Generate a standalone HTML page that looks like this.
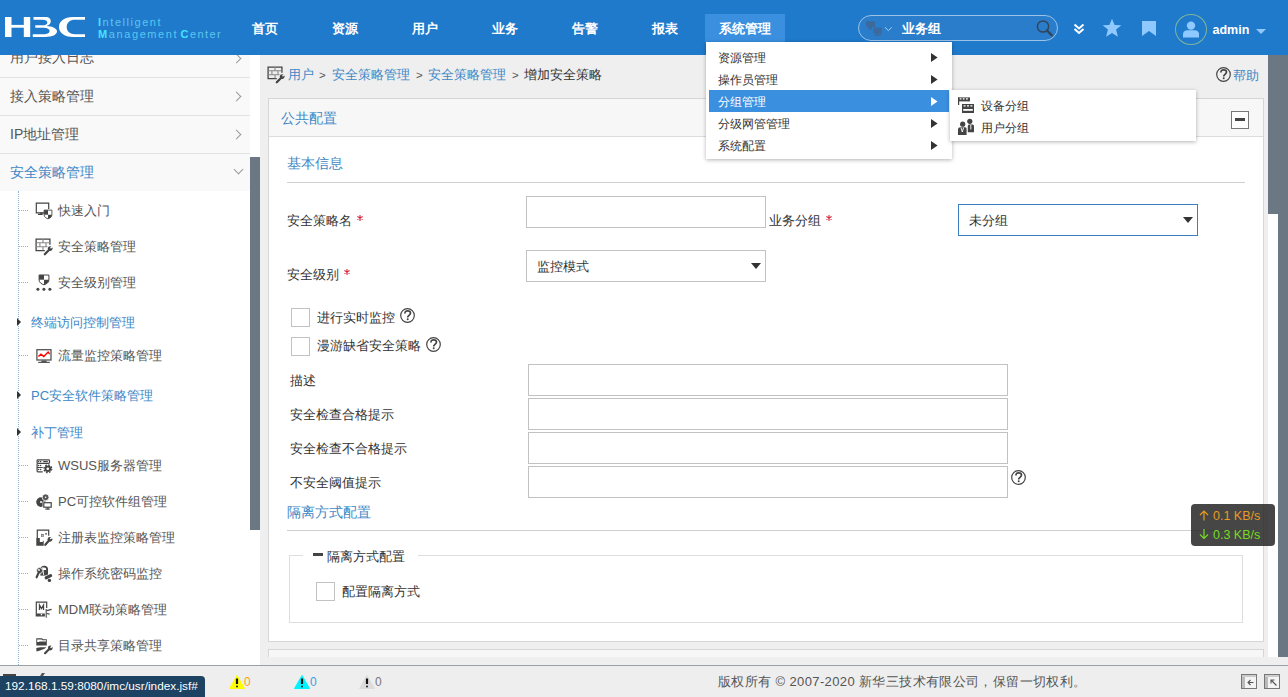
<!DOCTYPE html>
<html><head><meta charset="utf-8">
<style>
*{box-sizing:border-box;margin:0;padding:0}
html,body{width:1288px;height:697px;overflow:hidden;background:#efefef;font-family:"Liberation Sans",sans-serif;color:#333}
.a{position:absolute}
.t{position:absolute;white-space:nowrap;line-height:20px;height:20px}
.nav{position:absolute;top:19px;line-height:20px;font-size:13px;font-weight:900;color:#fff;white-space:nowrap}
.srow{position:absolute;left:0;width:250px;height:38px;background:#f9f9f9;border-bottom:1px solid #e2e2e2}
.srow span{position:absolute;left:10px;top:8px;line-height:20px;font-size:14px;color:#555;white-space:nowrap}
.chev{position:absolute;left:233px;width:7px;height:7px;border-right:1px solid #9a9a9a;border-top:1px solid #9a9a9a;transform:rotate(45deg)}
.sub{position:absolute;left:58px;font-size:13px;color:#555;line-height:20px;white-space:nowrap}
.cat{position:absolute;left:31px;font-size:13px;color:#3c88c8;line-height:20px;white-space:nowrap}
.hc{position:absolute;left:19px;width:9px;height:1px;border-top:1px dotted #8fb3d6}
.ctri{position:absolute;left:17px;width:0;height:0;border-top:4px solid transparent;border-bottom:4px solid transparent;border-left:4px solid #333}
.ico{position:absolute;left:36px;width:16px;height:16px}
.lbl{position:absolute;font-size:13px;color:#333;line-height:20px;white-space:nowrap}
.inp{position:absolute;background:#fff;border:1px solid #c2c2c2}
.cb{position:absolute;width:19px;height:19px;background:#fff;border:1px solid #c2c2c2}
.req{position:absolute;color:#d4303a;font-size:13px;line-height:20px}
.dtri{position:absolute;width:0;height:0;border-left:5px solid transparent;border-right:5px solid transparent;border-top:6px solid #333}
.mi{position:absolute;left:718px;font-size:12px;line-height:20px;color:#333;white-space:nowrap}
.mtri{position:absolute;left:931px;width:0;height:0;border-top:4.5px solid transparent;border-bottom:4.5px solid transparent;border-left:6px solid #333}
.q{position:absolute;width:15px;height:15px;border:1.5px solid #555;border-radius:50%;font-size:11px;font-weight:bold;color:#555;text-align:center;line-height:12px}
.blue{color:#3f87c5}
</style></head><body>
<!-- content background -->
<div class="a" style="left:260px;top:55px;width:1028px;height:610px;background:#efefef"></div>

<!-- ============ SIDEBAR ============ -->
<div class="a" style="left:0;top:55px;width:250px;height:610px;background:#fff"></div>
<div class="srow" style="top:40px"><span style="top:7px">用户接入日志</span></div>
<div class="chev" style="top:55px"></div>
<div class="srow" style="top:78px"><span>接入策略管理</span></div>
<div class="chev" style="top:93px"></div>
<div class="srow" style="top:116px"><span>IP地址管理</span></div>
<div class="chev" style="top:131px"></div>
<div class="srow" style="top:154px;height:37px;border-bottom:none"><span style="color:#3f87c5">安全策略管理</span></div>
<div class="chev" style="left:235px;top:166px;transform:rotate(135deg)"></div>

<!-- tree -->
<div class="a" style="left:18px;top:191px;width:1px;height:474px;border-left:1px dotted #8fb3d6"></div>
<div class="hc" style="top:210px"></div>
<div class="hc" style="top:246px"></div>
<div class="hc" style="top:282px"></div>
<div class="hc" style="top:355px"></div>
<div class="hc" style="top:465px"></div>
<div class="hc" style="top:501px"></div>
<div class="hc" style="top:537px"></div>
<div class="hc" style="top:573px"></div>
<div class="hc" style="top:609px"></div>
<div class="hc" style="top:645px"></div>

<div class="ctri" style="top:318px"></div>
<div class="ctri" style="top:391px"></div>
<div class="ctri" style="top:428px"></div>
<div class="cat" style="top:313px">终端访问控制管理</div>
<div class="cat" style="top:386px">PC安全软件策略管理</div>
<div class="cat" style="top:423px">补丁管理</div>

<!-- icons -->
<svg class="a" style="left:32px;top:198px" width="24" height="24" viewBox="0 0 24 24"><path d="M12 14.8 H4.3 V5.2 H16.7 V11" fill="none" stroke="#444" stroke-width="1.2"/><path d="M6 16.4 H9" stroke="#444" stroke-width="1.2"/><rect x="8.3" y="14.4" width="2.4" height="2.6" fill="#444"/><path d="M12.1 12.1 H19.9 V16.8 C19.9 18.9 18 20.2 16 20.8 C14 20.2 12.1 18.9 12.1 16.8 Z" fill="#fff" stroke="#444" stroke-width="0.9"/><rect x="12.1" y="12.1" width="3.9" height="4.6" fill="#444"/><path d="M16 16.7 H19.9 C19.9 18.9 18 20.2 16 20.8 Z" fill="#444"/></svg>
<svg class="a" style="left:32px;top:236px" width="24" height="24" viewBox="0 0 24 24"><path d="M17.9 8.8 V3.1 H4.1 V14.6 H12.8" fill="none" stroke="#444" stroke-width="1.3"/><path d="M4.1 6.8 H17.9 M4.1 10.7 H15.5 M11 3.1 V6.8 M7.9 6.8 V10.7 M14 6.8 V10.7 M11 10.7 V14.6" stroke="#888" stroke-width="1.1"/><path d="M12.8 18.2 L17.2 13.8" stroke="#444" stroke-width="2.3" stroke-linecap="round"/><circle cx="18.2" cy="12.6" r="2.4" fill="#444"/><path d="M18.5 12.3 L21 9.8" stroke="#fff" stroke-width="1.5"/></svg>
<svg class="a" style="left:32px;top:270px" width="24" height="24" viewBox="0 0 24 24"><path d="M7.1 5 H16.9 V10 C16.9 12.5 14.5 14 12 14.8 C9.5 14 7.1 12.5 7.1 10 Z" fill="#fff" stroke="#444" stroke-width="1"/><rect x="7.1" y="5" width="4.9" height="4.7" fill="#444"/><path d="M12 9.7 H16.9 V10 C16.9 12.5 14.5 14 12 14.8 Z" fill="#444"/><circle cx="5.9" cy="19.3" r="1.5" fill="#444"/><circle cx="11.9" cy="19.3" r="1.5" fill="#444"/><circle cx="17.9" cy="19.3" r="1.5" fill="#444"/></svg>
<svg class="a" style="left:32px;top:343px" width="24" height="24" viewBox="0 0 24 24"><rect x="4.9" y="6.7" width="14.1" height="10.3" fill="#fff" stroke="#555" stroke-width="1.3"/><rect x="9.4" y="17.5" width="5.2" height="1.5" fill="#555"/><path d="M6.2 19.4 H17.8" stroke="#555" stroke-width="1.2"/><path d="M6.4 13.6 L9 11.2 L11.8 13.6 L16.1 9 L17.6 11" fill="none" stroke="#f00" stroke-width="1.4"/></svg>
<svg class="a" style="left:32px;top:453px" width="24" height="24" viewBox="0 0 24 24"><rect x="5.1" y="6.8" width="12.4" height="3.6" rx="0.8" fill="none" stroke="#444" stroke-width="1.2"/><path d="M10.7 14.5 H5.1 V10.4 M10.7 18.8 H5.9 Q5.1 18.8 5.1 18 V14.5" fill="none" stroke="#444" stroke-width="1.2"/><g fill="#444"><circle cx="6.6" cy="8.6" r="0.75"/><circle cx="8.6" cy="8.6" r="0.75"/><circle cx="6.6" cy="12.5" r="0.75"/><circle cx="8.6" cy="12.5" r="0.75"/><circle cx="6.6" cy="16.6" r="0.75"/><circle cx="8.6" cy="16.6" r="0.75"/></g><path d="M11.2 8.6 H15.8" stroke="#444" stroke-width="1.2"/><circle cx="15.8" cy="15.8" r="3.3" fill="#444"/><circle cx="15.8" cy="15.8" r="3.8" fill="none" stroke="#444" stroke-width="1.5" stroke-dasharray="1.6 1.38"/><circle cx="15.8" cy="15.8" r="1.3" fill="#fff"/></svg>
<svg class="a" style="left:32px;top:489px" width="24" height="24" viewBox="0 0 24 24"><circle cx="9" cy="13.1" r="4.8" fill="#444"/><circle cx="9" cy="13.1" r="1" fill="#fff"/><circle cx="13.6" cy="8.3" r="3.4" fill="#555" stroke="#fff" stroke-width="0.8"/><circle cx="13.6" cy="8.3" r="0.8" fill="#fff"/><rect x="10.6" y="12.5" width="9.8" height="6.9" fill="#fff"/><rect x="11.8" y="13.7" width="7.4" height="4.5" fill="#fff" stroke="#444" stroke-width="1.2"/><rect x="14.8" y="18.6" width="2" height="1.2" fill="#444"/><path d="M13.3 20.1 H17.7" stroke="#444" stroke-width="1.2"/></svg>
<svg class="a" style="left:32px;top:525px" width="24" height="24" viewBox="0 0 24 24"><path d="M5.3 13 V5.2 H16.7 V10.7" fill="none" stroke="#444" stroke-width="1.2"/><path d="M4.3 13 H7.8 V16.9 H10.5 L11.7 15.2 V20.7 H4.3 Z" fill="#444"/><rect x="9.1" y="9.1" width="2.6" height="2.6" fill="#444"/><path d="M10.4 9.1 V11.7 M9.1 10.4 H11.7" stroke="#fff" stroke-width="0.4"/><rect x="13.3" y="8.1" width="1.5" height="1.5" fill="#444"/><path d="M13.1 20 L17 15.6" stroke="#fff" stroke-width="3.4"/><path d="M13.3 19.8 L17 15.6" stroke="#444" stroke-width="2.2" stroke-linecap="round"/><circle cx="18" cy="14.3" r="2.4" fill="#444"/><path d="M18.3 14 L20.8 11.5" stroke="#fff" stroke-width="1.5"/></svg>
<svg class="a" style="left:32px;top:561px" width="24" height="24" viewBox="0 0 24 24"><path d="M9 9 C9 4.6 15.2 4.6 15.2 9" fill="none" stroke="#444" stroke-width="1.8"/><rect x="8.4" y="9" width="7.6" height="5.6" fill="#444"/><path d="M10.8 6 L11.6 14" stroke="#fff" stroke-width="0.9"/><circle cx="7.6" cy="9.6" r="3" fill="#444" stroke="#fff" stroke-width="0.8"/><circle cx="7" cy="9" r="0.9" fill="#fff"/><path d="M6.8 11.5 L4.6 16.3" stroke="#444" stroke-width="2.1" stroke-linecap="round"/><path d="M14.2 16.8 L18.6 14.6" stroke="#fff" stroke-width="4.4" stroke-linecap="round"/><path d="M14.2 16.8 L18.6 14.6" stroke="#444" stroke-width="3.2" stroke-linecap="round"/><circle cx="17.4" cy="19.4" r="1.7" fill="#444"/></svg>
<svg class="a" style="left:32px;top:597px" width="24" height="24" viewBox="0 0 24 24"><path d="M14.7 11 V5.2 H4.3 V18.8 H12.8" fill="none" stroke="#444" stroke-width="1.2"/><rect x="4.3" y="16.5" width="8.5" height="2.3" fill="#444"/><circle cx="9.5" cy="17.6" r="0.8" fill="#fff"/><path d="M7.5 12.9 V8.1 L9.5 11.5 L11.5 8.1 V12.9" fill="none" stroke="#444" stroke-width="1.3"/><rect x="13.6" y="12" width="1.2" height="8.7" fill="#555"/><path d="M14.8 13.6 L19.6 12.4 M14.8 16.5 L17.6 17.2" stroke="#444" stroke-width="1.2"/></svg>
<svg class="a" style="left:32px;top:633px" width="24" height="24" viewBox="0 0 24 24"><path d="M4.3 5.2 H10 L11 6.2 H14.8 V12.6 H4.3 Z" fill="#444"/><path d="M5.2 6.4 H9.6 L10.4 7.2 H14 V8.4 H7.5 L7 8.9 H5.2 Z" fill="#fff"/><path d="M4.3 15 C6.5 14.5 9 14 14.5 14.5 C12 16.3 8 17.5 4.5 18.6 Z" fill="#444"/><path d="M13.1 20.2 L17 16.3" stroke="#444" stroke-width="2.2" stroke-linecap="round"/><circle cx="18.3" cy="15" r="2.4" fill="#444"/><path d="M18.6 14.7 L21.1 12.2" stroke="#fff" stroke-width="1.5"/></svg>

<div class="sub" style="top:201px">快速入门</div>
<div class="sub" style="top:237px">安全策略管理</div>
<div class="sub" style="top:273px">安全级别管理</div>
<div class="sub" style="top:346px">流量监控策略管理</div>
<div class="sub" style="top:456px">WSUS服务器管理</div>
<div class="sub" style="top:492px">PC可控软件组管理</div>
<div class="sub" style="top:528px">注册表监控策略管理</div>
<div class="sub" style="top:564px">操作系统密码监控</div>
<div class="sub" style="top:600px">MDM联动策略管理</div>
<div class="sub" style="top:636px">目录共享策略管理</div>

<!-- sidebar scrollbar -->
<div class="a" style="left:250px;top:55px;width:10px;height:610px;background:#fff"></div>
<div class="a" style="left:250px;top:157px;width:10px;height:373px;background:#6b7883"></div>
<!-- ============ HEADER ============ -->
<div class="a" style="left:0;top:0;width:1288px;height:55px;background:#1f7acc"></div>
<svg class="a" style="left:0;top:0" width="90" height="45" viewBox="0 0 90 45">
 <g fill="#fff">
  <rect x="5" y="17" width="6.5" height="20"/>
  <rect x="23.8" y="17" width="6.4" height="20"/>
  <rect x="11" y="24.9" width="13" height="2.8"/>
  <path d="M33.5 17 L45 17 C49.5 17 50.8 19 50.8 21.3 C50.8 23.6 49 25.3 46.5 26 C52.5 26.4 57 28.5 57 31.3 C57 34.8 52.5 37 45 37 L32.8 37 L32.8 34.2 L43 34.2 C47.5 34.2 49.6 33 49.6 31 C49.6 29 47.5 27.7 43.5 27.7 L35.3 27.7 L35.3 25.3 L42.5 25.3 C45.5 25.3 47.3 24.2 47.3 22.4 C47.3 20.6 45.5 19.7 42.5 19.7 L33.5 19.7 Z"/>
  <path d="M85 17 L73 17 C64 17 59 21.5 59 27 C59 32.5 64 37 73 37 L85 37 L85 34.2 L75 34.2 C70 34.2 66.7 31.5 66.7 27 C66.7 22.5 70 19.8 75 19.8 L85 19.8 Z"/>
 </g>
</svg>
<div class="a" style="left:98px;top:15px;font-size:11px;line-height:14px;letter-spacing:1.55px;color:#5cc6ee;white-space:nowrap"><span style="color:#45e2ff;font-weight:bold">I</span>ntelligent</div>
<div class="a" style="left:98px;top:27px;font-size:11px;line-height:14px;letter-spacing:1.6px;color:#5cc6ee;white-space:nowrap"><span style="color:#45e2ff;font-weight:bold">M</span>anagement</div>
<div class="a" style="left:180.5px;top:27px;font-size:11px;line-height:14px;letter-spacing:1.45px;color:#5cc6ee;white-space:nowrap"><span style="color:#45e2ff;font-weight:bold">C</span>enter</div>

<div class="nav" style="left:252px">首页</div>
<div class="nav" style="left:332px">资源</div>
<div class="nav" style="left:412px">用户</div>
<div class="nav" style="left:492px">业务</div>
<div class="nav" style="left:572px">告警</div>
<div class="nav" style="left:652px">报表</div>
<div class="a" style="left:705px;top:14px;width:80px;height:28px;background:#3a8fdf"></div>
<div class="nav" style="left:719px">系统管理</div>

<!-- search pill -->
<div class="a" style="left:858px;top:15px;width:200px;height:26px;border:1px solid #9cc2e8;border-radius:13px;background:#2a7dcb"></div>
<svg class="a" style="left:864px;top:19px" width="30" height="18" viewBox="0 0 30 18">
 <g fill="#3d6a9c"><rect x="2.1" y="2.2" width="9" height="6"/><rect x="4.5" y="8" width="3.2" height="2.6"/>
 <rect x="9.2" y="8.6" width="8.6" height="6.3"/><rect x="12.5" y="14.8" width="2" height="1.2"/><rect x="10.2" y="15.8" width="6.8" height="1.1"/></g>
 <path d="M21 8.3 L24.4 11.6 L27.8 8.3" stroke="#a8cdf0" stroke-width="1" fill="none"/>
</svg>
<div class="a" style="left:902px;top:19px;font-size:13px;line-height:20px;font-weight:bold;color:#fff;white-space:nowrap">业务组</div>
<svg class="a" style="left:1035px;top:19px" width="20" height="20" viewBox="0 0 20 20">
 <circle cx="8" cy="7.5" r="5.6" stroke="#34455a" stroke-width="1.5" fill="none"/>
 <path d="M12 11.5 L16.8 16.3" stroke="#34455a" stroke-width="2.4" stroke-linecap="round"/>
</svg>

<!-- double chevron -->
<svg class="a" style="left:1072px;top:22px" width="14" height="14" viewBox="0 0 14 14">
 <path d="M2.5 2.5 L7 6.5 L11.5 2.5 M2.5 7 L7 11 L11.5 7" stroke="#fff" stroke-width="2" fill="none"/>
</svg>
<!-- star -->
<svg class="a" style="left:1101px;top:18px" width="22" height="20" viewBox="0 0 22 20">
 <path d="M11 0.8 L13.6 7 L20.3 7.3 L15.1 11.6 L16.9 18.8 L11 15 L5.1 18.8 L6.9 11.6 L1.7 7.3 L8.4 7 Z" fill="#8fc9ff"/>
</svg>
<!-- bookmark -->
<svg class="a" style="left:1141px;top:20px" width="16" height="18" viewBox="0 0 16 18">
 <path d="M1 1 L15 1 L15 16 L8 11 L1 16 Z" fill="#8fc9ff"/>
</svg>
<!-- avatar -->
<div class="a" style="left:1175px;top:14px;width:32px;height:31px;border:1px solid #7fb59a;border-radius:50%"></div>
<svg class="a" style="left:1182px;top:21px" width="18" height="17" viewBox="0 0 18 17">
 <circle cx="9" cy="4.6" r="4.2" fill="#8fc9ff"/>
 <path d="M1 16.5 L1 13 C1 10.5 3 9.2 5.5 9.2 L12.5 9.2 C15 9.2 17 10.5 17 13 L17 16.5 Z" fill="#8fc9ff"/>
</svg>
<div class="a" style="left:1212.5px;top:20px;font-size:12.5px;line-height:20px;font-weight:bold;color:#fff;white-space:nowrap">admin</div>
<div class="a" style="left:1256px;top:29px;width:0;height:0;border-left:5px solid transparent;border-right:5px solid transparent;border-top:5px solid #8fc9ff"></div>
<!-- ============ CONTENT ============ -->
<svg class="a" style="left:264px;top:64px" width="24" height="24" viewBox="0 0 24 24"><path d="M17.9 8.8 V3.1 H4.1 V14.6 H12.8" fill="none" stroke="#444" stroke-width="1.3"/><path d="M4.1 6.8 H17.9 M4.1 10.7 H15.5 M11 3.1 V6.8 M7.9 6.8 V10.7 M14 6.8 V10.7 M11 10.7 V14.6" stroke="#888" stroke-width="1.1"/><path d="M12.8 18.2 L17.2 13.8" stroke="#444" stroke-width="2.3" stroke-linecap="round"/><circle cx="18.2" cy="12.6" r="2.4" fill="#444"/><path d="M18.5 12.3 L21 9.8" stroke="#efefef" stroke-width="1.5"/></svg>
<div class="lbl blue" style="left:288px;top:65px">用户</div>
<div class="lbl" style="left:319px;top:65px;color:#555;font-size:11.5px">&gt;</div>
<div class="lbl blue" style="left:332px;top:65px">安全策略管理</div>
<div class="lbl" style="left:416px;top:65px;color:#555;font-size:11.5px">&gt;</div>
<div class="lbl blue" style="left:428px;top:65px">安全策略管理</div>
<div class="lbl" style="left:512px;top:65px;color:#555;font-size:11.5px">&gt;</div>
<div class="lbl" style="left:524px;top:65px">增加安全策略</div>

<svg class="a" style="left:1216px;top:67px" width="15" height="15" viewBox="0 0 15 15"><circle cx="7.5" cy="7.5" r="6.8" fill="none" stroke="#444" stroke-width="1.2"/><path d="M4.9 5.4 C4.9 3.6 6.1 2.8 7.6 2.8 C9.3 2.8 10.5 3.7 10.5 5.1 C10.5 6.6 9.3 7.1 8.5 7.8 C8 8.2 7.7 8.6 7.7 9.5" fill="none" stroke="#444" stroke-width="1.7"/><circle cx="7.7" cy="11.3" r="1" fill="#444"/></svg>
<div class="lbl blue" style="left:1233px;top:66px">帮助</div>

<!-- panel -->
<div class="a" style="left:268px;top:98px;width:996px;height:544px;background:#fff;border:1px solid #d6d6d6"></div>
<div class="a" style="left:269px;top:99px;width:994px;height:38px;background:#f7f7f7;border-bottom:1px solid #dcdcdc"></div>
<div class="a blue" style="left:281px;top:108px;font-size:14px;line-height:20px;white-space:nowrap">公共配置</div>
<div class="a" style="left:1231px;top:111px;width:18px;height:18px;border:1px solid #777;background:#fff"></div>
<div class="a" style="left:1235px;top:118px;width:10px;height:3px;background:#444"></div>

<div class="a blue" style="left:287px;top:153px;font-size:14px;line-height:20px;white-space:nowrap">基本信息</div>
<div class="a" style="left:287px;top:182px;width:958px;height:1px;background:#cfcfcf"></div>

<div class="lbl" style="left:287px;top:211px">安全策略名</div>
<svg class="a" style="left:356.3px;top:214px" width="8" height="8" viewBox="0 0 8 8"><path d="M4 1 V7 M1.4 2.5 L6.6 5.5 M1.4 5.5 L6.6 2.5" stroke="#d8283c" stroke-width="1.1"/></svg>
<div class="inp" style="left:526px;top:196px;width:240px;height:32px"></div>
<div class="lbl" style="left:769px;top:211px">业务分组</div>
<svg class="a" style="left:825.4px;top:214px" width="8" height="8" viewBox="0 0 8 8"><path d="M4 1 V7 M1.4 2.5 L6.6 5.5 M1.4 5.5 L6.6 2.5" stroke="#d8283c" stroke-width="1.1"/></svg>
<div class="inp" style="left:958px;top:204px;width:240px;height:32px;border-color:#3b7ec2"></div>
<div class="lbl" style="left:969px;top:211px">未分组</div>
<div class="dtri" style="left:1183px;top:217px"></div>

<div class="lbl" style="left:287px;top:265px">安全级别</div>
<svg class="a" style="left:343.3px;top:268px" width="8" height="8" viewBox="0 0 8 8"><path d="M4 1 V7 M1.4 2.5 L6.6 5.5 M1.4 5.5 L6.6 2.5" stroke="#d8283c" stroke-width="1.1"/></svg>
<div class="inp" style="left:526px;top:250px;width:240px;height:32px"></div>
<div class="lbl" style="left:537px;top:257px">监控模式</div>
<div class="dtri" style="left:751px;top:263px"></div>

<div class="cb" style="left:291px;top:308px"></div>
<div class="lbl" style="left:317px;top:308px">进行实时监控</div>
<svg class="a" style="left:400px;top:308px" width="15" height="15" viewBox="0 0 15 15"><circle cx="7.5" cy="7.5" r="6.8" fill="none" stroke="#444" stroke-width="1.2"/><path d="M4.9 5.4 C4.9 3.6 6.1 2.8 7.6 2.8 C9.3 2.8 10.5 3.7 10.5 5.1 C10.5 6.6 9.3 7.1 8.5 7.8 C8 8.2 7.7 8.6 7.7 9.5" fill="none" stroke="#444" stroke-width="1.7"/><circle cx="7.7" cy="11.3" r="1" fill="#444"/></svg>
<div class="cb" style="left:291px;top:337px"></div>
<div class="lbl" style="left:317px;top:336px">漫游缺省安全策略</div>
<svg class="a" style="left:426px;top:337px" width="15" height="15" viewBox="0 0 15 15"><circle cx="7.5" cy="7.5" r="6.8" fill="none" stroke="#444" stroke-width="1.2"/><path d="M4.9 5.4 C4.9 3.6 6.1 2.8 7.6 2.8 C9.3 2.8 10.5 3.7 10.5 5.1 C10.5 6.6 9.3 7.1 8.5 7.8 C8 8.2 7.7 8.6 7.7 9.5" fill="none" stroke="#444" stroke-width="1.7"/><circle cx="7.7" cy="11.3" r="1" fill="#444"/></svg>

<div class="lbl" style="left:290px;top:371px">描述</div>
<div class="inp" style="left:528px;top:364px;width:480px;height:32px"></div>
<div class="lbl" style="left:290px;top:405px">安全检查合格提示</div>
<div class="inp" style="left:528px;top:398px;width:480px;height:32px"></div>
<div class="lbl" style="left:290px;top:439px">安全检查不合格提示</div>
<div class="inp" style="left:528px;top:432px;width:480px;height:32px"></div>
<div class="lbl" style="left:290px;top:473px">不安全阈值提示</div>
<div class="inp" style="left:528px;top:466px;width:480px;height:32px"></div>
<svg class="a" style="left:1011px;top:470px" width="15" height="15" viewBox="0 0 15 15"><circle cx="7.5" cy="7.5" r="6.8" fill="none" stroke="#444" stroke-width="1.2"/><path d="M4.9 5.4 C4.9 3.6 6.1 2.8 7.6 2.8 C9.3 2.8 10.5 3.7 10.5 5.1 C10.5 6.6 9.3 7.1 8.5 7.8 C8 8.2 7.7 8.6 7.7 9.5" fill="none" stroke="#444" stroke-width="1.7"/><circle cx="7.7" cy="11.3" r="1" fill="#444"/></svg>

<div class="a blue" style="left:287px;top:502px;font-size:14px;line-height:20px;white-space:nowrap">隔离方式配置</div>
<div class="a" style="left:287px;top:530px;width:958px;height:1px;background:#cfcfcf"></div>

<div class="a" style="left:289px;top:555px;width:954px;height:68px;border:1px solid #dedede"></div>
<div class="a" style="left:303px;top:550px;width:115px;height:10px;background:#fff"></div>
<div class="a" style="left:313px;top:553px;width:10px;height:3px;background:#444"></div>
<div class="lbl" style="left:327px;top:547px">隔离方式配置</div>
<div class="cb" style="left:316px;top:582px"></div>
<div class="lbl" style="left:342px;top:582px">配置隔离方式</div>

<!-- panel 2 (cut) -->
<div class="a" style="left:268px;top:649px;width:996px;height:20px;background:#f7f7f7;border:1px solid #d6d6d6"></div>
<div class="a" style="left:260px;top:657px;width:1028px;height:8px;background:#efefef"></div>

<!-- right scrollbars -->
<div class="a" style="left:1268px;top:55px;width:10px;height:602px;background:#fff"></div>
<div class="a" style="left:1268px;top:55px;width:10px;height:159px;background:#6b7883"></div>
<div class="a" style="left:1278px;top:55px;width:10px;height:602px;background:#6b7883"></div>

<!-- net speed widget -->
<div class="a" style="left:1191px;top:504px;width:84px;height:42px;background:rgba(38,38,38,0.85);border-radius:4px"></div>
<svg class="a" style="left:1199px;top:510px" width="10" height="11" viewBox="0 0 10 11"><path d="M5 1 V10.5 M1 5 L5 1 L9 5" stroke="#e89a22" stroke-width="1.2" fill="none"/></svg>
<div class="a" style="left:1213px;top:506px;font-size:12.5px;line-height:20px;color:#e89a22;white-space:nowrap">0.1 KB/s</div>
<svg class="a" style="left:1199px;top:529px" width="10" height="11" viewBox="0 0 10 11"><path d="M5 0 V9.5 M1 5.5 L5 9.5 L9 5.5" stroke="#74dc20" stroke-width="1.2" fill="none"/></svg>
<div class="a" style="left:1213px;top:525px;font-size:12.5px;line-height:20px;color:#74dc20;white-space:nowrap">0.3 KB/s</div>

<!-- ============ MENU ============ -->
<div class="a" style="left:706px;top:42px;width:246px;height:117px;background:#fff;box-shadow:0 1px 4px rgba(0,0,0,0.3)"></div>
<div class="a" style="left:709px;top:90px;width:240px;height:22px;background:#3a8fdf"></div>
<div class="mi" style="top:48px">资源管理</div>
<div class="mi" style="top:70px">操作员管理</div>
<div class="mi" style="top:92px;color:#fff">分组管理</div>
<div class="mi" style="top:114px">分级网管管理</div>
<div class="mi" style="top:136px">系统配置</div>
<svg class="a" style="left:931px;top:52px" width="8" height="11" viewBox="0 0 8 11"><path d="M0 1 L6.6 5.5 L0 10 Z" fill="#333"/></svg>
<svg class="a" style="left:931px;top:74px" width="8" height="11" viewBox="0 0 8 11"><path d="M0 1 L6.6 5.5 L0 10 Z" fill="#333"/></svg>
<svg class="a" style="left:931px;top:96px" width="8" height="11" viewBox="0 0 8 11"><path d="M0 1 L6.6 5.5 L0 10 Z" fill="#fff"/></svg>
<svg class="a" style="left:931px;top:118px" width="8" height="11" viewBox="0 0 8 11"><path d="M0 1 L6.6 5.5 L0 10 Z" fill="#333"/></svg>
<svg class="a" style="left:931px;top:140px" width="8" height="11" viewBox="0 0 8 11"><path d="M0 1 L6.6 5.5 L0 10 Z" fill="#333"/></svg>

<div class="a" style="left:950px;top:90px;width:246px;height:51px;background:#fff;box-shadow:0 1px 4px rgba(0,0,0,0.3)"></div>
<svg class="a" style="left:956px;top:95px" width="20" height="20" viewBox="0 0 20 20"><rect x="2" y="2.4" width="12" height="4" fill="#444"/><path d="M3.6 3.8 H5.4 M6.8 3.8 H8.6 M10 3.8 H11.8" stroke="#fff" stroke-width="1.2"/><path d="M2.6 2.4 V10" stroke="#444" stroke-width="1.2"/><rect x="6" y="9" width="12" height="9" fill="#444"/><path d="M7.6 10.8 H9.6 M11 10.8 H13 M14.4 10.8 H16.4" stroke="#fff" stroke-width="1.2"/><rect x="7.2" y="14" width="9.6" height="1.8" fill="#fff"/></svg>
<svg class="a" style="left:956px;top:117px" width="20" height="20" viewBox="0 0 20 20"><circle cx="6.7" cy="7.2" r="2.6" fill="#444"/><circle cx="13.8" cy="4.3" r="2.6" fill="#444"/><path d="M2 18 V12.5 C2 11 3 10.2 4.4 10.2 H9 C10.4 10.2 10.6 11 10.6 12.5 V18 Z" fill="#444"/><path d="M11.8 15.3 V9.5 C11.8 8.2 12.6 7.6 13.6 7.6 H16 C17.2 7.6 18 8.2 18 9.5 V15.3 Z" fill="#444"/><path d="M5 10.6 L6.3 15 L7.6 10.6" stroke="#fff" stroke-width="0.9" fill="none"/><path d="M14.8 8 V12.5" stroke="#fff" stroke-width="0.9"/></svg>
<div class="mi" style="left:981px;top:96px">设备分组</div>
<div class="mi" style="left:981px;top:118px">用户分组</div>

<!-- ============ FOOTER ============ -->
<div class="a" style="left:0;top:665px;width:1288px;height:32px;background:#eeeeee;border-top:1px solid #9aa0a6"></div>
<div class="a" style="left:718px;top:672px;font-size:13px;line-height:20px;letter-spacing:0.38px;color:#555;white-space:nowrap">版权所有 © 2007-2020 新华三技术有限公司，保留一切权利。</div>

<svg class="a" style="left:229px;top:675px" width="16" height="14" viewBox="0 0 16 14"><path d="M8 0.5 L15.5 13.5 H0.5 Z" fill="#ffff00" stroke="#ffff00" stroke-width="1" stroke-linejoin="round"/><path d="M8 3.5 V9" stroke="#111" stroke-width="2.2"/><circle cx="8" cy="11.5" r="1" fill="#222"/></svg>
<div class="a" style="left:244px;top:673px;font-size:12px;line-height:18px;color:#ffa500">0</div>
<svg class="a" style="left:294px;top:675px" width="16" height="14" viewBox="0 0 16 14"><path d="M8 0.5 L15.5 13.5 H0.5 Z" fill="#00f4ff" stroke="#00f4ff" stroke-width="1" stroke-linejoin="round"/><path d="M8 3.5 V9" stroke="#111" stroke-width="2.2"/><circle cx="8" cy="11.5" r="1" fill="#222"/></svg>
<div class="a" style="left:310px;top:673px;font-size:12px;line-height:18px;color:#3a9ee8">0</div>
<svg class="a" style="left:359px;top:675px" width="16" height="14" viewBox="0 0 16 14"><path d="M8 0.5 L15.5 13.5 H0.5 Z" fill="#dcdcdc" stroke="#dcdcdc" stroke-width="1" stroke-linejoin="round"/><path d="M8 3.5 V9" stroke="#111" stroke-width="2.2"/><circle cx="8" cy="11.5" r="1" fill="#222"/></svg>
<div class="a" style="left:375px;top:673px;font-size:12px;line-height:18px;color:#777">0</div>

<div class="a" style="left:1241px;top:674px;width:16px;height:15px;border:1px solid #777;background:#f4f4f4"></div>
<div class="a" style="left:1242px;top:675px;width:3px;height:13px;background:#bbb"></div><div class="a" style="left:1242px;top:675px;width:14px;height:2px;background:#ccc"></div>
<svg class="a" style="left:1245px;top:677px" width="11" height="11" viewBox="0 0 11 11"><path d="M8.5 5.5 H3 M5.5 3 L3 5.5 L5.5 8" stroke="#555" stroke-width="1.1" fill="none"/></svg>
<div class="a" style="left:1264px;top:674px;width:16px;height:15px;border:1px solid #777;background:#f4f4f4"></div>
<div class="a" style="left:1265px;top:675px;width:3px;height:13px;background:#bbb"></div><div class="a" style="left:1265px;top:675px;width:14px;height:2px;background:#ccc"></div>
<svg class="a" style="left:1268px;top:677px" width="11" height="11" viewBox="0 0 11 11"><path d="M8.5 8.5 L3 3 M3 6.5 V3 H6.5" stroke="#555" stroke-width="1.1" fill="none"/></svg>

<!-- status tooltip -->
<div class="a" style="left:3px;top:674px;width:13px;height:2px;background:#444"></div>
<div class="a" style="left:41px;top:673px;width:3px;height:3px;background:#555;transform:skewX(-30deg)"></div>
<div class="a" style="left:0;top:676px;width:205px;height:21px;background:#1e4262;border-radius:0 4px 0 0"></div>
<div class="a" style="left:5px;top:676px;font-size:11.8px;line-height:20px;color:#fff;white-space:nowrap">192.168.1.59:8080/imc/usr/index.jsf#</div>

</body></html>
